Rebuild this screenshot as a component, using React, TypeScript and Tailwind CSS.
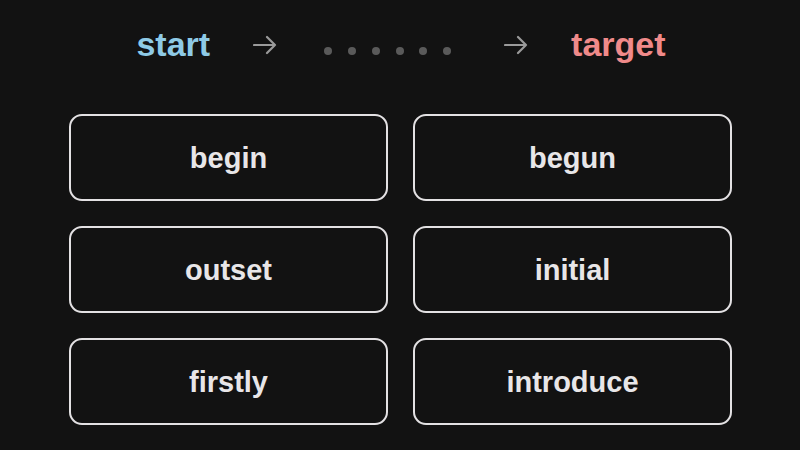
const words = ['begin', 'begun', 'outset', 'initial', 'firstly', 'introduce'];

const Arrow = ({ className = '' }: { className?: string }) => (
    <svg width="24" height="20" viewBox="0 0 24 20" fill="none" className={className}>
        <path d="M1 10h21M14 2l8 8-8 8" stroke="#9a9a9a" strokeWidth="2.2" strokeLinecap="round" strokeLinejoin="round" />
    </svg>
);

export default function App() {
    return (
        <div
            className="w-[800px] h-[450px] bg-[#121212] flex flex-col items-center"
            style={{ fontFamily: '"Liberation Sans", Arial, sans-serif' }}
        >
            <div className="h-[88px] flex items-center justify-center pl-[2px]">
                <span className="text-[34px] font-bold text-[#8ecae6]">start</span>
                <Arrow className="ml-[43px] mt-[1px]" />
                <div className="ml-[47px] flex items-center gap-[15.8px] pt-[13px]">
                    {[0, 1, 2, 3, 4, 5].map(i => (
                        <span key={i} className="w-[8px] h-[8px] rounded-full bg-[#5a5a5a]" />
                    ))}
                </div>
                <Arrow className="ml-[53px] mt-[1px]" />
                <span className="ml-[43px] text-[34px] font-bold text-[#f08a8a]">target</span>
            </div>
            <div className="mt-[26px] grid grid-cols-2 gap-x-[25px] gap-y-[25px] pl-[1px]">
                {words.map(w => (
                    <div
                        key={w}
                        className="w-[319px] h-[87px] rounded-[13px] border-2 border-[#e3e1e3] flex items-center justify-center pt-[2px]"
                    >
                        <span className="text-[29px] font-bold text-[#e8e6e8]">{w}</span>
                    </div>
                ))}
            </div>
        </div>
    );
}
